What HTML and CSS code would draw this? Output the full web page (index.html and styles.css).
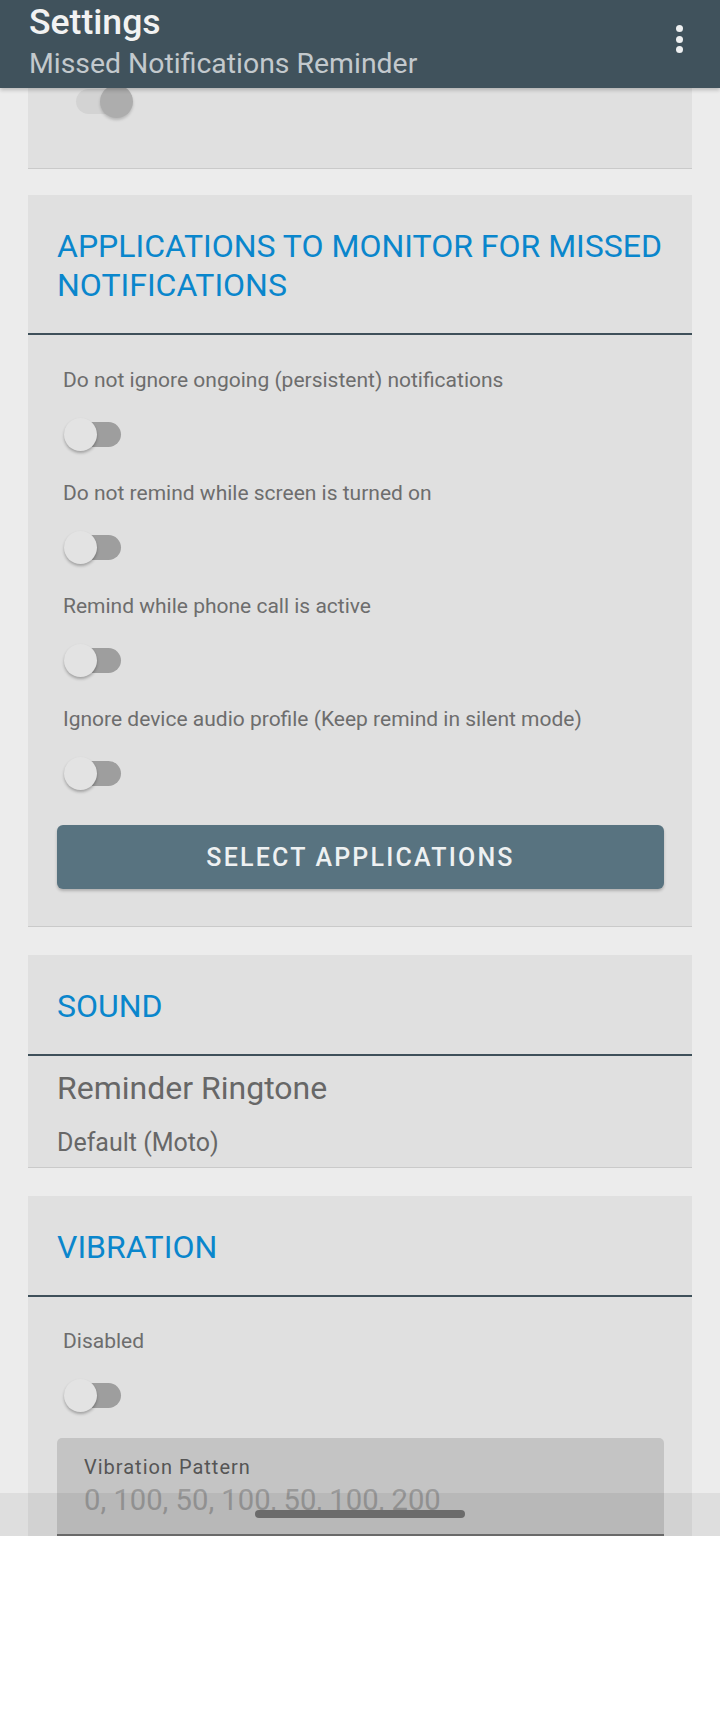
FILE: index.html
```html
<!DOCTYPE html>
<html lang="en">
<head>
<meta charset="utf-8">
<title>Settings</title>
<link rel="stylesheet" href="styles.css">
</head>
<body>
<div class="screen">
  <header class="appbar">
    <div class="titles">
      <div class="title">Settings</div>
      <div class="subtitle">Missed Notifications Reminder</div>
    </div>
    <div class="kebab" aria-label="More options"><span></span><span></span><span></span></div>
  </header>

  <main class="content">
    <section class="card card-partial">
      <div class="switch switch-on-disabled"><span class="track"></span><span class="thumb"></span></div>
    </section>

    <section class="card card-apps">
      <h2 class="cat-title">APPLICATIONS TO MONITOR FOR MISSED NOTIFICATIONS</h2>
      <div class="cat-body">
        <div class="pref-list">
          <div class="pref-switch">
            <div class="pref-label">Do not ignore ongoing (persistent) notifications</div>
            <div class="switch"><span class="track"></span><span class="thumb"></span></div>
          </div>
          <div class="pref-switch">
            <div class="pref-label">Do not remind while screen is turned on</div>
            <div class="switch"><span class="track"></span><span class="thumb"></span></div>
          </div>
          <div class="pref-switch">
            <div class="pref-label">Remind while phone call is active</div>
            <div class="switch"><span class="track"></span><span class="thumb"></span></div>
          </div>
          <div class="pref-switch">
            <div class="pref-label">Ignore device audio profile (Keep remind in silent mode)</div>
            <div class="switch"><span class="track"></span><span class="thumb"></span></div>
          </div>
        </div>
        <button class="btn" type="button">SELECT APPLICATIONS</button>
      </div>
    </section>

    <section class="card card-sound">
      <h2 class="cat-title">SOUND</h2>
      <div class="cat-body sound-body">
        <div class="pref-title">Reminder Ringtone</div>
        <div class="pref-summary">Default (Moto)</div>
      </div>
    </section>

    <section class="card card-vibration">
      <h2 class="cat-title">VIBRATION</h2>
      <div class="cat-body">
        <div class="pref-switch">
          <div class="pref-label">Disabled</div>
          <div class="switch"><span class="track"></span><span class="thumb"></span></div>
        </div>
        <div class="textfield">
          <div class="tf-label">Vibration Pattern</div>
          <div class="tf-value">0, 100, 50, 100, 50, 100, 200</div>
        </div>
      </div>
    </section>
  </main>

  <div class="navbar"><span class="pill"></span></div>
</div>
</body>
</html>
```

FILE: styles.css
```css
* {
  box-sizing: border-box;
}

html, body {
  margin: 0;
  padding: 0;
  background: #ffffff;
}

body {
  width: 720px;
  height: 1712px;
  font-family: Roboto, "Noto Sans", "Liberation Sans", sans-serif;
}

.screen {
  position: relative;
  width: 720px;
  height: 1536px;
  overflow: hidden;
  background: #ececec;
}

/* ---------- App bar ---------- */
.appbar {
  position: relative;
  z-index: 2;
  height: 88px;
  background: #40525c;
  display: flex;
  justify-content: space-between;
  align-items: flex-start;
  padding-left: 29px;
  box-shadow: 0 2px 4px rgba(0, 0, 0, 0.22);
}

.titles {
  padding-top: 2px;
}

.title {
  font-size: 35.6px;
  line-height: 40px;
  font-weight: 500;
  color: #f2f2f2;
}

.subtitle {
  margin-top: 5px;
  font-size: 28.4px;
  line-height: 34px;
  color: #c3c9cd;
}

.kebab {
  display: flex;
  flex-direction: column;
  gap: 3.7px;
  margin-top: 25px;
  margin-right: 37.5px;
}

.kebab span {
  display: block;
  width: 7px;
  height: 7px;
  border-radius: 50%;
  background: #eef0f1;
}

/* ---------- Content ---------- */
.content {
  display: flex;
  flex-direction: column;
}

.card {
  margin: 0 28px;
  background: #e0e0e0;
  border-bottom: 1px solid #cacaca;
}

.card-partial {
  margin-top: -25px;
  padding: 20px 0 49px 48px;
}

.card-apps {
  margin-top: 26px;
}

.card-sound,
.card-vibration {
  margin-top: 28px;
}

.cat-title {
  margin: 0;
  padding: 32px 12px 28px 29px;
  font-size: 32px;
  line-height: 39px;
  font-weight: 400;
  color: #0a86cc;
  border-bottom: 2px solid #3f505a;
}

.cat-body {
  padding: 33px 28px 0 29px;
}

.card-apps .cat-body {
  padding-bottom: 37px;
}

.card-vibration .cat-body {
  padding-top: 32px;
}

.pref-list {
  display: flex;
  flex-direction: column;
  gap: 29px;
}

.pref-switch {
  padding-left: 6px;
}

.pref-label {
  font-size: 21px;
  line-height: 24px;
  color: #6d6d6d;
}

/* ---------- Switch ---------- */
.switch {
  position: relative;
  width: 60px;
  height: 36px;
  margin-top: 24px;
}

.switch .track {
  position: absolute;
  left: 8px;
  top: 5.5px;
  width: 50px;
  height: 25px;
  border-radius: 12.5px;
  background: #9e9e9e;
}

.switch .thumb {
  position: absolute;
  left: 0.5px;
  top: 1.5px;
  width: 33px;
  height: 33px;
  border-radius: 50%;
  background: #e3e3e3;
  box-shadow: 0 2px 3px rgba(0, 0, 0, 0.28);
}

.switch-on-disabled {
  margin-top: 0;
}

.switch-on-disabled .track {
  left: 0;
  background: #d3d3d3;
}

.switch-on-disabled .thumb {
  left: 24px;
  background: #adadad;
  box-shadow: 0 2px 3px rgba(0, 0, 0, 0.18);
}

/* ---------- Button ---------- */
.btn {
  display: block;
  width: 100%;
  height: 64px;
  margin-top: 34px;
  border: none;
  border-radius: 6px;
  background: #587380;
  color: #eef1f2;
  font-family: Roboto, "Noto Sans", "Liberation Sans", sans-serif;
  font-size: 25px;
  font-weight: 500;
  letter-spacing: 2.2px;
  box-shadow: 0 2px 3px rgba(0, 0, 0, 0.22);
}

/* ---------- Sound ---------- */
.sound-body {
  padding-top: 12px;
  padding-bottom: 9px;
}

.pref-title {
  font-size: 32px;
  line-height: 40px;
  color: #676767;
}

.pref-summary {
  margin-top: 20px;
  font-size: 25px;
  line-height: 30px;
  color: #676767;
}

/* ---------- Text field ---------- */
.textfield {
  margin-top: 25px;
  height: 98px;
  padding: 17px 20px 0 27px;
  background: #c4c4c4;
  border-radius: 5px 5px 0 0;
  border-bottom: 2px solid #707070;
}

.tf-label {
  font-size: 20px;
  line-height: 24px;
  letter-spacing: 1px;
  color: #555555;
}

.tf-value {
  margin-top: 4px;
  font-size: 29.2px;
  line-height: 34px;
  color: #9a9a9a;
}

/* ---------- Gesture nav bar overlay ---------- */
.navbar {
  position: absolute;
  left: 0;
  right: 0;
  bottom: 0;
  height: 43px;
  background: rgba(0, 0, 0, 0.06);
  display: flex;
  justify-content: center;
  align-items: flex-start;
  padding-top: 17px;
}

.pill {
  display: block;
  width: 210px;
  height: 8px;
  border-radius: 4px;
  background: #6b6b6b;
}
```
